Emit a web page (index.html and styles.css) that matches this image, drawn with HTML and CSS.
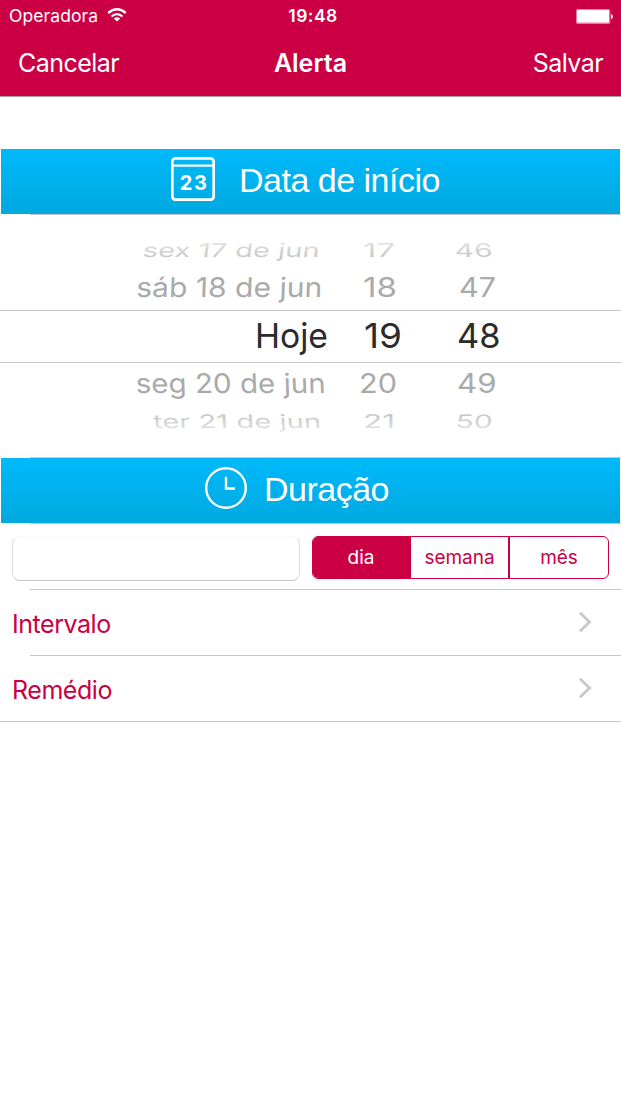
FILE: index.html
```html
<!DOCTYPE html>
<html lang="pt-BR">
<head>
<meta charset="utf-8">
<title>Alerta</title>
<link rel="stylesheet" href="styles.css">
</head>
<body>
<header class="top">
  <div class="status">
    <div class="carrier"><span class="operator">Operadora</span>
      <svg class="wifi" width="20" height="14" viewBox="0 0 20 14"><g fill="none" stroke="#fff" stroke-width="2.3"><path d="M1.2 5Q10-2.5 18.8 5"/><path d="M4.5 8.5Q10 3.7 15.5 8.5"/></g><path d="M10 13.6L6.8 10.6Q10 7.8 13.2 10.6Z" fill="#fff"/></svg>
    </div>
    <span class="time">19:48</span>
    <svg class="battery" width="37" height="15" viewBox="0 0 37 15"><rect width="34.3" height="15" rx="1.8" fill="#e97f9f"/><rect x="1" y="1" width="32" height="12.4" rx="1" fill="#fff"/><path d="M35 5Q37 5.5 37 7.5T35 10Z" fill="#fff"/></svg>
  </div>
  <nav class="nav"><span class="cancel">Cancelar</span><h1 class="title">Alerta</h1><span class="save">Salvar</span></nav>
</header>
<main>
  <section class="band start">
    <svg width="44" height="44" viewBox="0 0 44 44"><rect x="1.3" y="1.3" width="41.4" height="41.4" rx="3.5" fill="none" stroke="#fff" stroke-width="2.7"/><path d="M2 8.6H42" stroke="#fff" stroke-width="2.3"/><text class="day" x="8.8" y="32.7" textLength="27">23</text></svg>
    <h2 class="start-label">Data de início</h2>
  </section>
  <svg class="wheel" width="621" height="242" viewBox="0 215 621 242">
    <defs>
      <linearGradient id="up" gradientUnits="userSpaceOnUse" x1="0" y1="-15" x2="0" y2="3"><stop stop-color="#e3e3e3"/><stop offset="1" stop-color="#c4c4c4"/></linearGradient>
      <linearGradient id="down" gradientUnits="userSpaceOnUse" x1="0" y1="-15" x2="0" y2="3"><stop stop-color="#c4c4c4"/><stop offset="1" stop-color="#e3e3e3"/></linearGradient>
    </defs>
    <path d="M0 310.5H621M0 362.5H621" stroke="#c8c8c8"/>
    <g font-size="19" fill="url(#up)">
      <text transform="translate(142 256.7) skewX(-7)" textLength="177" lengthAdjust="spacingAndGlyphs">sex 17 de jun</text>
      <text transform="translate(363 256.7)" textLength="32" lengthAdjust="spacingAndGlyphs">17</text>
      <text transform="translate(455 256.7) skewX(4)" textLength="38" lengthAdjust="spacingAndGlyphs">46</text>
    </g>
    <g font-size="27" fill="#aaa">
      <text transform="translate(136 297.4) skewX(-2)" textLength="186" lengthAdjust="spacingAndGlyphs">sáb 18 de jun</text>
      <text x="363" y="297.4" textLength="34" lengthAdjust="spacingAndGlyphs">18</text>
      <text x="459" y="297.4" textLength="37" lengthAdjust="spacingAndGlyphs">47</text>
      <text transform="translate(136 393.4) skewX(2)" textLength="190" lengthAdjust="spacingAndGlyphs">seg 20 de jun</text>
      <text x="359" y="393.4" textLength="38" lengthAdjust="spacingAndGlyphs">20</text>
      <text x="457" y="393.4" textLength="39.5" lengthAdjust="spacingAndGlyphs">49</text>
    </g>
    <g font-size="34" fill="#2b2b2b">
      <text x="255" y="347.8" textLength="73" lengthAdjust="spacingAndGlyphs">Hoje</text>
      <text x="364" y="347.8" textLength="38" lengthAdjust="spacingAndGlyphs">19</text>
      <text x="457" y="347.8" textLength="43.5" lengthAdjust="spacingAndGlyphs">48</text>
    </g>
    <g font-size="18.5" fill="url(#down)">
      <text transform="translate(153.5 428) skewX(4)" textLength="168" lengthAdjust="spacingAndGlyphs">ter 21 de jun</text>
      <text transform="translate(363 428)" textLength="32" lengthAdjust="spacingAndGlyphs">21</text>
      <text transform="translate(455 428) skewX(-5)" textLength="37" lengthAdjust="spacingAndGlyphs">50</text>
    </g>
  </svg>
  <section class="band length">
    <svg width="42" height="42" viewBox="0 0 42 42"><circle cx="21" cy="21" r="19.8" fill="none" stroke="#fff" stroke-width="2.4"/><path d="M21 9.8V21.5H30" fill="none" stroke="#fff" stroke-width="2.4"/></svg>
    <h2 class="length-label">Duração</h2>
  </section>
  <div class="duration">
    <input class="amount" type="text" aria-label="Duração">
    <div class="segments"><span class="seg active">dia</span><span class="seg"><span class="week">semana</span></span><span class="seg"><span class="month">mês</span></span></div>
  </div>
  <div class="row"><span class="interval">Intervalo</span><svg width="14" height="22" viewBox="0 0 14 22"><path d="M2 1.8L11.5 11L2 20.2" fill="none" stroke="#c7c7cc" stroke-width="2.8"/></svg></div>
  <div class="row last"><span class="medicine">Remédio</span><svg width="14" height="22" viewBox="0 0 14 22"><path d="M2 1.8L11.5 11L2 20.2" fill="none" stroke="#c7c7cc" stroke-width="2.8"/></svg></div>
</main>
</body>
</html>
```

FILE: styles.css
```css
* { box-sizing: border-box; }
body { margin: 0; width: 621px; height: 1104px; overflow: hidden; background: #fff; font-family: Inter, Roboto, sans-serif; }
h1, h2 { margin: 0; font-weight: 400; }
svg { display: block; flex: none; }
.top { height: 97px; background: #cb0044; border-bottom: 1px solid #aaa2a6; color: #fff; }
.status { height: 32px; display: grid; grid-template-columns: 1fr auto 1fr; align-items: center; padding: 0 8px 0 9px; font-size: 17.5px; line-height: 32px; }
.carrier { display: flex; align-items: center; gap: 9px; }
.operator { letter-spacing: .1px; }
.wifi { margin-bottom: 3px; }
.time { font-weight: 600; letter-spacing: .5px; padding-left: 4px; }
.battery { justify-self: end; }
.nav { height: 64px; display: grid; grid-template-columns: 1fr auto 1fr; align-items: center; padding: 0 18px; font-size: 25px; line-height: 30px; letter-spacing: -.55px; }
.nav > * { margin-top: -2px; }
.title { font-size: 25px; font-weight: 600; letter-spacing: 0; }
.save { justify-self: end; }
.band { height: 66px; margin-left: 1px; margin-right: 1px; display: flex; align-items: center; background: linear-gradient(#00b9fb, #00a9df); background-size: 100% 65px; background-repeat: no-repeat; color: #fff; position: relative; font-family: "Liberation Sans", Arial, sans-serif; }
.band::after { content: ""; height: 1px; background: #c8c7cc; position: absolute; left: 29px; right: -1px; bottom: 0; }
.band svg { margin-bottom: 2px; }
.band h2 { font-size: 34px; line-height: 40px; letter-spacing: -.5px; }
.start { margin-top: 52px; padding-left: 170px; padding-bottom: 4px; gap: 24px; }
.length { padding-left: 204px; padding-bottom: 4px; gap: 17px; }
.length::before { content: ""; height: 1px; background: #c8c7cc; position: absolute; left: 29px; right: -1px; top: -1px; }
.day { font: 700 20px Inter, sans-serif; fill: #fff; }
.wheel { margin-bottom: 1px; height: 242px; }
.duration { height: 66px; display: flex; align-items: flex-start; gap: 12px; padding: 12px 12px 0; position: relative; }
.amount { width: 288px; height: 45px; border: 1px solid #dedede; border-top-color: #fafafa; border-bottom-color: #c8c8c8; border-radius: 8px; padding: 0 10px; background: #fff; }
.segments { width: 297px; height: 43px; display: grid; grid-template-columns: 98px 99px 1fr; border: 1px solid #cb0044; border-radius: 6px; overflow: hidden; font-size: 19px; color: #cb0044; }
.seg { display: flex; align-items: center; justify-content: center; }
.seg:nth-child(2) { border-right: 2px solid #cb0044; }
.week { letter-spacing: -.05px; }
.active { background: #cb0044; color: #fff; padding-right: 2px; }
.row { height: 66px; display: flex; justify-content: space-between; align-items: center; padding: 0 29px 0 12px; color: #cb0044; font-size: 25px; letter-spacing: -.45px; position: relative; }
.row span { padding-top: 1px; }
.row svg { margin-bottom: 2px; }
.duration::after, .row::after { content: ""; height: 1px; background: #c8c7cc; position: absolute; left: 30px; right: 0; bottom: 0; }
.last::after { left: 0; }
```
